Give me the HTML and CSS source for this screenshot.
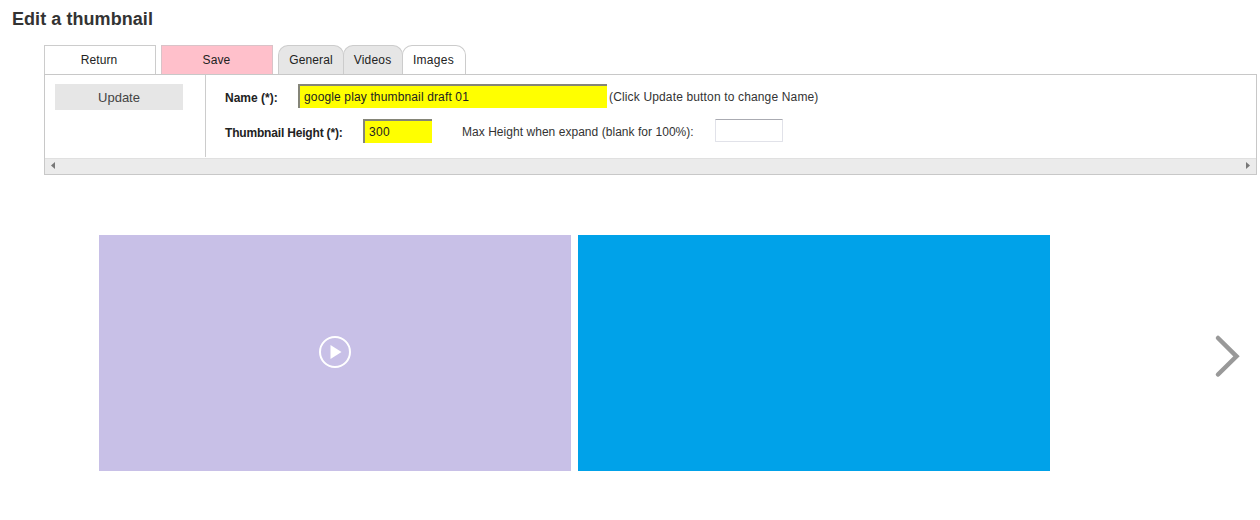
FILE: index.html
```html
<!DOCTYPE html>
<html lang="en">
<head>
<meta charset="utf-8">
<title>Edit a thumbnail</title>
<link rel="stylesheet" href="styles.css">
</head>
<body>
<h1 class="title">Edit a thumbnail</h1>
<main class="editor">
  <nav class="tabs">
    <a class="action">Return</a>
    <a class="action save">Save</a>
    <a class="tab general">General</a>
    <a class="tab videos">Videos</a>
    <a class="tab images">Images</a>
  </nav>
  <section class="panel">
    <div class="panel-body">
      <div class="side"><button class="update">Update</button></div>
      <form class="fields">
        <div class="row">
          <label class="label name-label">Name (*):</label>
          <input class="field required name" value="google play thumbnail draft 01">
          <span class="hint">(Click Update button to change Name)</span>
        </div>
        <div class="row">
          <label class="label height-label">Thumbnail Height (*):</label>
          <input class="field required height" value="300">
          <label class="max-label">Max Height when expand (blank for 100%):</label>
          <input class="field max">
        </div>
      </form>
    </div>
    <div class="scrollbar">
      <svg width="4" height="7" viewBox="0 0 4 7"><path d="M4 0v7L0 3.5z" fill="#777"/></svg>
      <svg width="4" height="7" viewBox="0 0 4 7"><path d="M0 0v7l4-3.500z" fill="#777"/></svg>
    </div>
  </section>
</main>
<section class="carousel">
  <div class="slide video">
    <svg width="34" height="34" viewBox="0 0 34 34"><circle cx="17" cy="17" r="15" fill="none" stroke="#fff" stroke-width="2"/><path d="M12.500 10v14l11-7z" fill="#fff"/></svg>
  </div>
  <div class="slide image"></div>
  <svg class="next" width="26" height="44" viewBox="0 0 26 44"><path d="M4 4l18.500 18.300L4 40.500" fill="none" stroke="#999" stroke-width="4.500" stroke-linecap="round"/></svg>
</section>
</body>
</html>
```
FILE: styles.css
```css
* { box-sizing: border-box; }
body {
  margin: 0;
  width: 1260px;
  height: 520px;
  overflow: hidden;
  background: #fff;
  color: #333;
  font: 12px/18px "Liberation Sans", Arial, sans-serif;
}
.title {
  margin: 0;
  padding: 8px 0 0 12px;
  height: 45px;
  font-size: 18px;
  line-height: 22px;
  letter-spacing: .06px;
}
.editor { margin-left: 44px; width: 1213px; }
.tabs { display: flex; height: 29px; color: #222; }
.action, .tab {
  border: 1px solid #ccc;
  border-bottom: 0;
  line-height: 28px;
  text-align: center;
}
.action { width: 112px; margin-right: 5px; padding-right: 2px; letter-spacing: .1px; }
.save { padding-right: 1px; background: #ffc0cb; border-color: #d9c3c8; }
.tab { border-radius: 10px 10px 0 0; background: #e6e6e6; letter-spacing: .1px; }
.general { width: 66px; }
.videos { width: 60px; margin-left: -1px; padding-right: 1px; letter-spacing: .2px; }
.images { width: 64px; margin-left: -1px; padding-right: 1px; background: #fff; letter-spacing: .3px; }
.panel { height: 101px; border: 1px solid #c8c8c8; }
.panel-body { display: flex; height: 83px; }
.side { width: 161px; height: 82px; padding: 9px 0 0 10px; border-right: 1px solid #ccc; }
.update {
  display: block;
  width: 128px;
  height: 26px;
  padding: 1px 0 0;
  border: 0;
  background: #e6e6e6;
  color: #444;
  font: 13px/25px "Liberation Sans", Arial, sans-serif;
}
.fields { padding: 9px 0 0 19px; }
.row { display: flex; height: 35px; line-height: 26px; white-space: nowrap; }
.label { font-weight: bold; line-height: 28px; color: #222; }
.name-label { width: 73px; }
.height-label { width: 138px; letter-spacing: -.18px; }
.field { margin: 0; padding: 0 4px; font: 12px/20px "Liberation Sans", Arial, sans-serif; }
.required { height: 24px; border: 0 solid #858578; border-width: 2px 0 0 2px; background: #ff0; color: #222; }
.name { width: 309px; letter-spacing: .14px; }
.hint { margin-left: 2px; letter-spacing: .15px; }
.height { width: 69px; letter-spacing: .3px; }
.max-label { width: 283px; padding-left: 30px; letter-spacing: .04px; }
.max { width: 68px; height: 23px; border: 1px solid #e1e2e9; border-top-color: #aaabb2; border-radius: 1px; }
.scrollbar {
  display: flex;
  justify-content: space-between;
  align-items: center;
  height: 16px;
  padding: 0 6px 2px;
  background: #ebebeb;
  border-top: 1px solid #e0e0e0;
}
.carousel { display: flex; margin: 60px 0 0 99px; height: 236px; }
.slide { width: 472px; height: 236px; margin-right: 7px; }
.video { display: flex; justify-content: center; align-items: center; padding-bottom: 2px; background: #c8c0e7; }
.image { background: #00a2e9; }
.next { margin: 99px 0 0 157px; }
```
